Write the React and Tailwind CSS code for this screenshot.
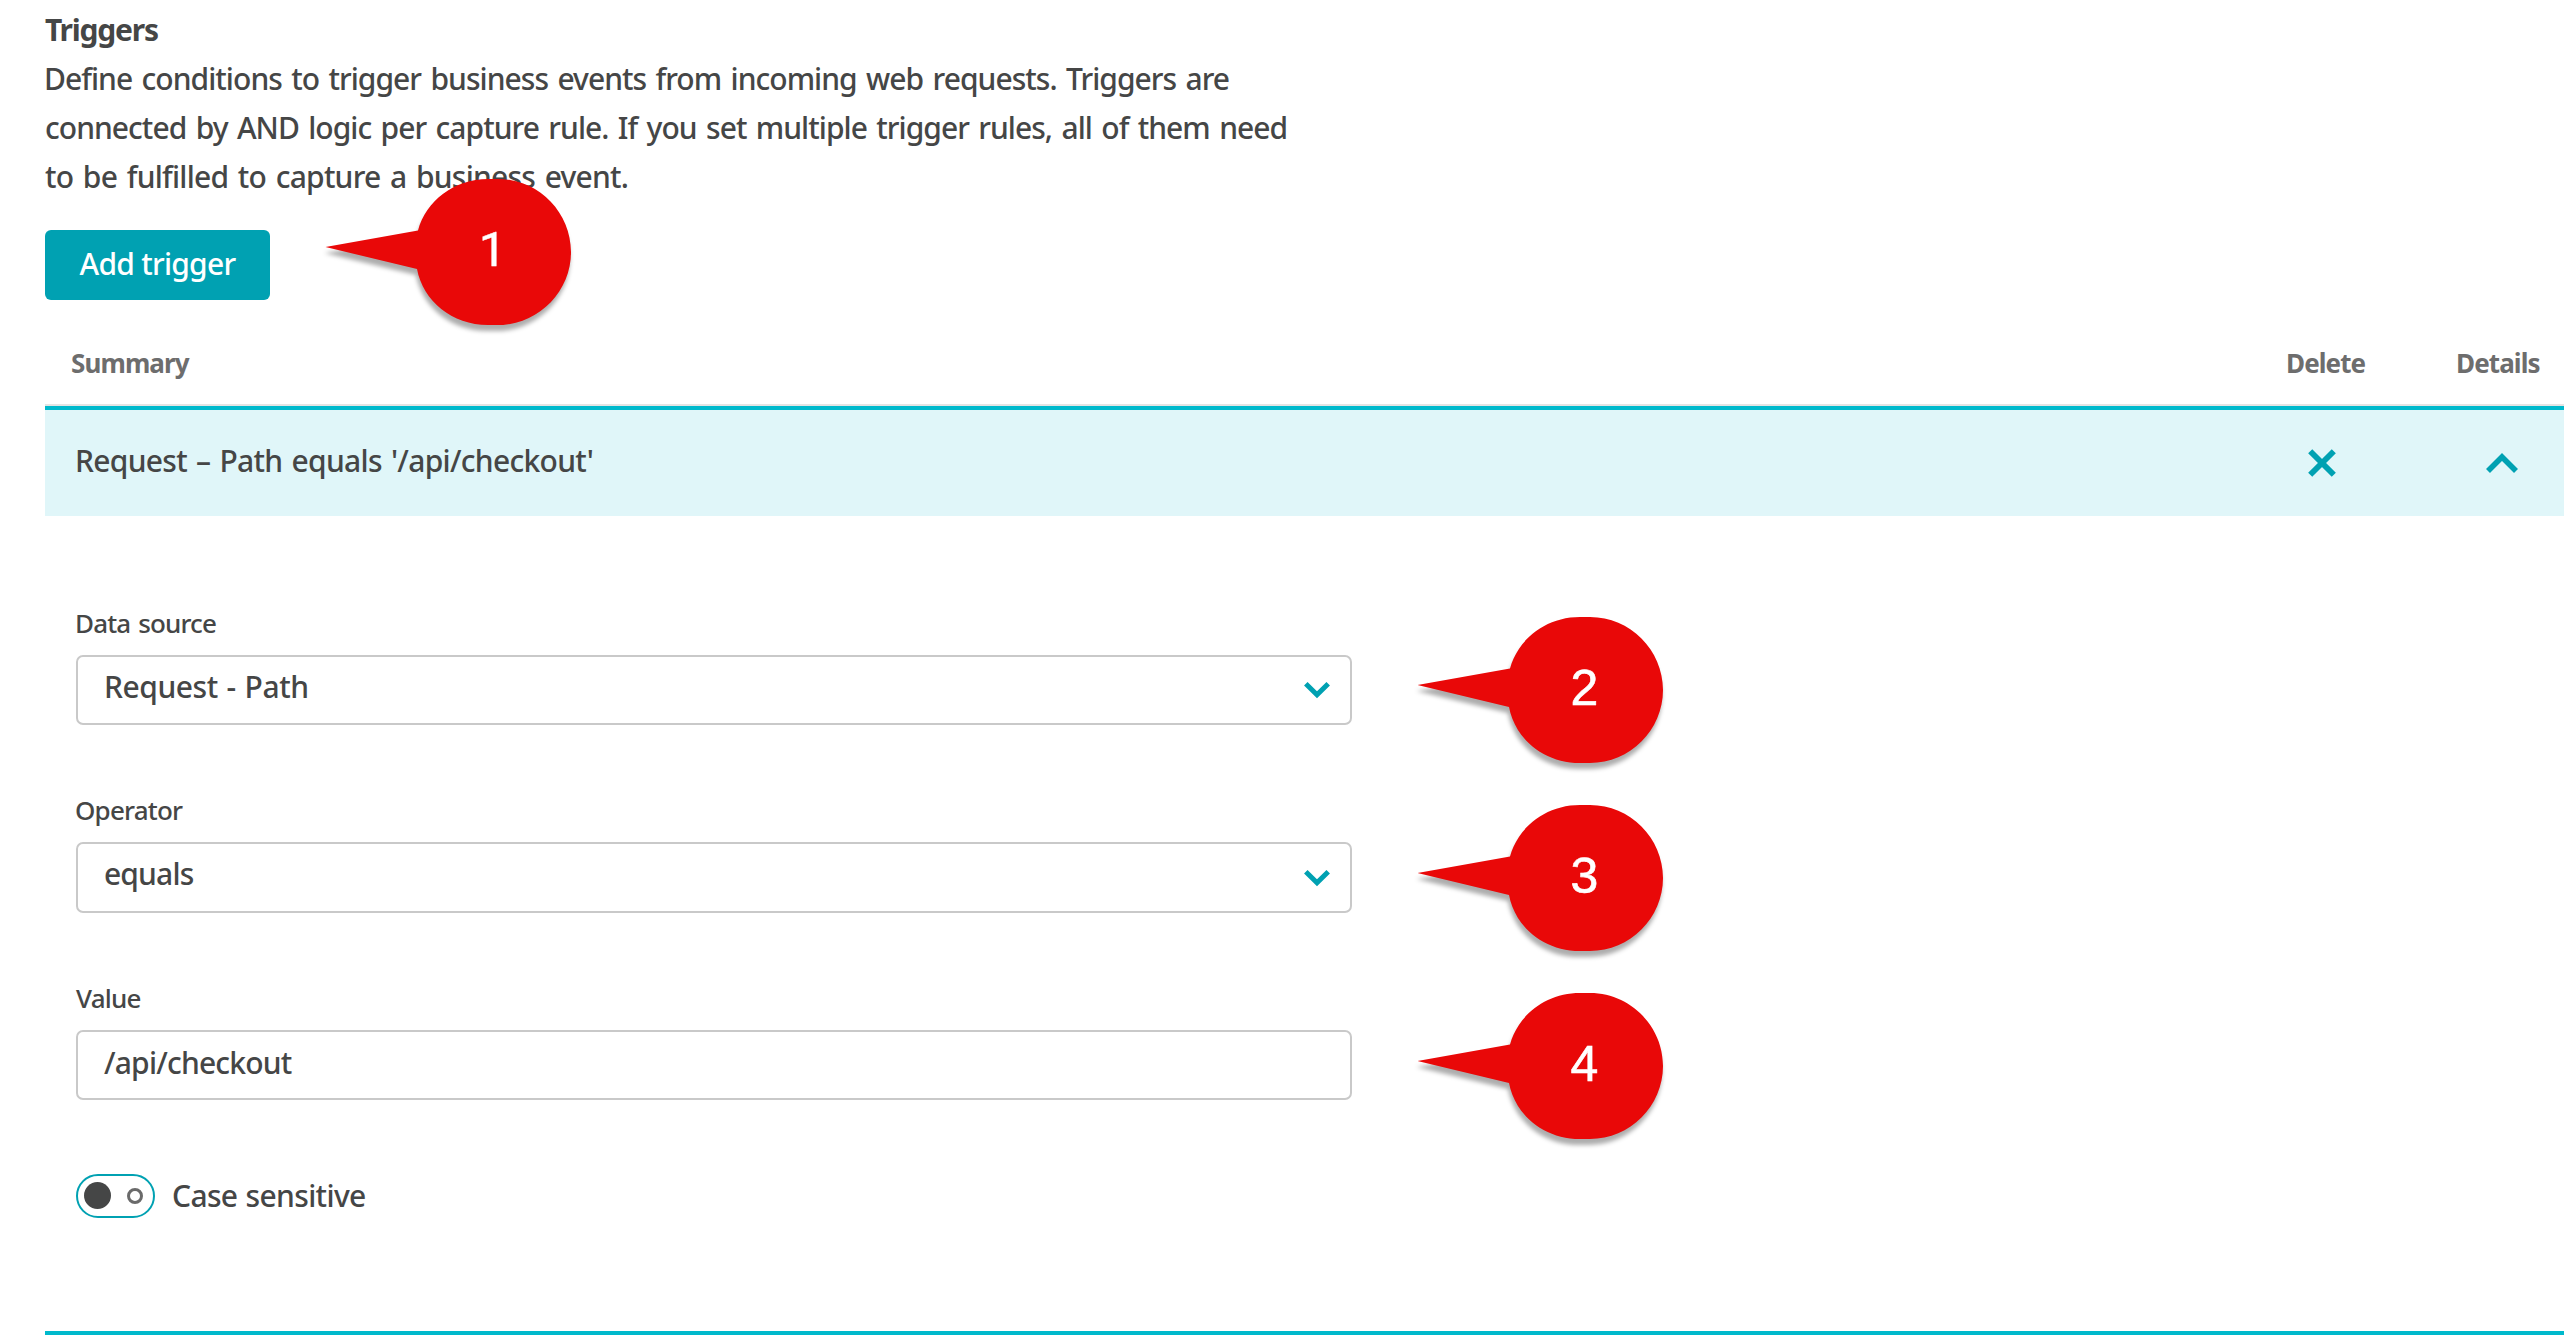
function Callout({ number, className }) {
  return (
    <div className={`pointer-events-none absolute z-10 h-[146px] w-[246px] ${className}`}>
      <svg
        viewBox="0 0 246 146"
        className="block h-full w-full overflow-visible drop-shadow-[-1px_6px_2px_rgba(0,0,0,0.32)]"
        aria-hidden="true"
      >
        <path
          d="M0.5 68 L93 51.5 C101 22 129 0 163 0 H173 C213 0 246 33 246 73 C246 113 213 146 173 146 H163 C127 146 98 122 92 90 Z"
          fill="#e90808"
        />
      </svg>
      <span
        className={`absolute -top-[2px] left-[91px] w-[153px] text-center leading-[146px] font-normal text-white ${
          number === 1
            ? "font-['Roboto',sans-serif] text-[49px] [-webkit-text-stroke:0.4px_white]"
            : "font-['Liberation_Sans',sans-serif] text-[50px] [-webkit-text-stroke:0.6px_white]"
        }`}
      >
        {number}
      </span>
    </div>
  );
}

function ChevronDown() {
  return (
    <svg width="28" height="18" viewBox="0 0 28 18" fill="none" aria-hidden="true">
      <path d="M2.8 2.8 L14 13.8 L25.2 2.8" stroke="#00a1b2" strokeWidth="5" />
    </svg>
  );
}

function Field({ label, value, select, className, boxClass, valueClass, labelClass, callout, calloutClass }) {
  return (
    <div className={`relative w-[1276px] ${className}`}>
      <div className={`h-[52px] text-[26px] leading-[40px] ${labelClass}`}>{label}</div>
      <div
        className={`flex items-center justify-between rounded-[7px] border-2 border-[#c9c9c9] bg-white pr-[19px] pl-[26px] ${boxClass}`}
      >
        <span className={`leading-[40px] ${valueClass}`}>{value}</span>
        {select && <ChevronDown />}
      </div>
      <Callout number={callout} className={calloutClass} />
    </div>
  );
}

export default function App() {
  return (
    <div className="h-[1336px] w-[2564px] overflow-hidden bg-white pl-[45px] font-['Noto_Sans',sans-serif] text-[30px] font-medium text-[#454646]">
      <section className="pt-[5px] leading-[49px] whitespace-nowrap">
        <h2 className="font-bold tracking-[-1.2px]">Triggers</h2>
        <p className="[word-spacing:2.5px]">
          <span className="-ml-px block tracking-[-0.96px]">
            Define conditions to trigger business events from incoming web requests. Triggers are
          </span>
          <span className="block tracking-[-0.96px]">
            connected by AND logic per capture rule. If you set multiple trigger rules, all of them need
          </span>
          <span className="block tracking-[-0.76px]">to be fulfilled to capture a business event.</span>
        </p>
      </section>

      <div className="relative mt-[29px] w-[225px]">
        <button
          type="button"
          className="flex h-[70px] w-[225px] items-center justify-center rounded-[6px] bg-[#00a1b2] pb-[3px] leading-[40px] tracking-[-0.75px] text-white"
        >
          Add trigger
        </button>
        <Callout number={1} className="-top-[51px] left-[280px]" />
      </div>

      <div className="flex h-[104px] pt-[43px] pl-[26px] text-[26px] leading-[40px] font-bold tracking-[-0.9px] text-[#6d6d6d]">
        <div className="flex-1">Summary</div>
        <div className="w-[170px]">Delete</div>
        <div className="w-[108px]">Details</div>
      </div>

      <div className="border-t-2 border-[#e4e4e4]">
        <div className="flex h-[110px] items-center border-t-4 border-[#00b9cc] bg-[#e0f6f9] pl-[30px]">
          <div className="flex-1 pb-[5px] leading-[40px] tracking-[-0.7px] [word-spacing:2px]">
            Request – Path equals '/api/checkout'
          </div>
          <div className="w-[171px] pl-[22px]">
            <svg width="30" height="30" viewBox="0 0 30 30" fill="none" aria-label="Delete">
              <path d="M3.2 3.2 L26.8 26.8 M26.8 3.2 L3.2 26.8" stroke="#00a1b2" strokeWidth="5.8" />
            </svg>
          </div>
          <div className="w-[108px] pl-[29px]">
            <svg width="34" height="22" viewBox="0 0 34 22" fill="none" aria-label="Collapse details">
              <path d="M3 19 L17 5 L31 19" stroke="#00a1b2" strokeWidth="5.6" />
            </svg>
          </div>
        </div>
      </div>

      <div className="border-b-4 border-[#00b9cc] pt-[87px] pb-[113px] pl-[31px]">
        <Field
          label="Data source"
          labelClass="-ml-px tracking-[-0.85px] [word-spacing:2px]"
          value="Request - Path"
          valueClass="pb-[6px] tracking-[-0.45px] [word-spacing:1.5px]"
          select
          boxClass="h-[70px]"
          callout={2}
          calloutClass="top-[14px] left-[1341px]"
        />
        <Field
          className="mt-[65px]"
          label="Operator"
          labelClass="-ml-px tracking-[-0.8px]"
          value="equals"
          valueClass="pb-[7px] tracking-[-0.85px]"
          select
          boxClass="h-[71px]"
          callout={3}
          calloutClass="top-[15px] left-[1341px]"
        />
        <Field
          className="mt-[65px]"
          label="Value"
          labelClass="tracking-[-0.8px]"
          value="/api/checkout"
          valueClass="pb-[4px] tracking-[-0.8px]"
          boxClass="h-[70px]"
          callout={4}
          calloutClass="top-[15px] left-[1341px]"
        />
        <div className="mt-[74px] flex h-[44px] items-center">
          <div
            role="switch"
            aria-checked="false"
            className="flex h-[44px] w-[79px] items-center justify-between rounded-full border-2 border-[#00a1b2] pr-[10px] pb-px pl-[6px]"
          >
            <span className="size-[27px] rounded-full bg-[#454646]" />
            <span className="size-[16px] rounded-full border-[3px] border-[#6a6a6a]" />
          </div>
          <span className="ml-[17px] leading-[40px] tracking-[-0.65px] [word-spacing:1px]">Case sensitive</span>
        </div>
      </div>
    </div>
  );
}
